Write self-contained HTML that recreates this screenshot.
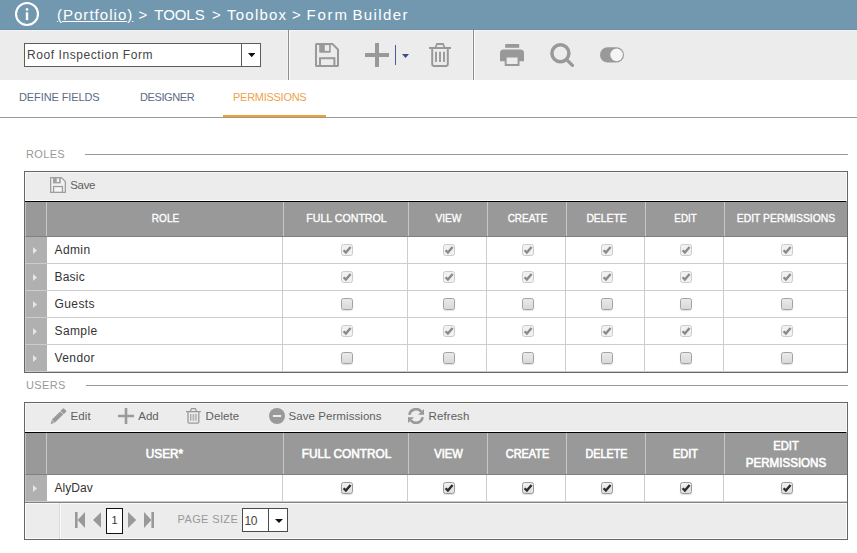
<!DOCTYPE html><html><head><meta charset="utf-8"><title>Form Builder</title><style>
html,body{margin:0;padding:0}
body{width:857px;height:553px;position:relative;overflow:hidden;background:#fff;font-family:"Liberation Sans",sans-serif;color:#333}
div,span,svg{position:absolute;box-sizing:border-box}
span.t{white-space:nowrap;line-height:1}
.hdr{left:0;top:0;width:857px;height:30px;background:#7298af;border-bottom:1px solid #6b91a9}
.cr{font-size:15px;color:#fff;top:7px;white-space:nowrap;line-height:1}
.bar{left:0;top:30px;width:857px;height:50px;background:#ececec;border-top:1px solid #f6f3f3}
.vsep{width:3px;background:#8c8c8c;top:30px;height:50px;border-left:1px solid #f3f3f3;border-right:1px solid #fcfcfc}
.tab{font-size:11px;top:92px;color:#5b6b86;letter-spacing:-0.1px}
.sec{font-size:11px;color:#999;letter-spacing:.35px}
.grid{left:24px;width:824px;border:1px solid #666;background:#fff}
.gtb{left:0;top:0;width:822px;height:28px;background:#ececec;border-left:1px solid #f7f7f7;border-top:1px solid #f5f5f5;border-right:1px solid #f7f7f7}
.gwl{left:0;width:822px;height:1px;background:#fff}
.gbl{left:0;width:822px;height:1px;background:#000;border-right:1px solid #8a8a8a}
.gh{left:0;width:822px;background:#999;border-bottom:1px solid #808080;border-left:1px solid #c2c2c2}
.ghs{width:1px;background:#c8c8c8}
.ght{color:#fff;white-space:nowrap;text-align:center;line-height:1}
.ght.n{-webkit-text-stroke:.35px #fff}
.ght.b{-webkit-text-stroke:.6px #fff}
.exp{left:0;width:21.5px;background:#b0b0b0;border-left:1px solid #c4c4c4}
.rs{height:1px;background:#cdcdcd}
.cs{width:1px;background:#cdcdcd}
.cell{font-size:12px;color:#333;letter-spacing:.4px;white-space:nowrap;line-height:1}
.tbt{font-size:11.5px;color:#606060;white-space:nowrap;line-height:1}
.cb{width:12px;height:12px;border-radius:2.5px}
.cb svg{left:-1px;top:-1px}
.cb.dc{background:#f1f1f1;border:1px solid #cccccc}
.cb.u{background:linear-gradient(#e9e9e9,#d9d9d9);border:1px solid #a2a2a2;box-shadow:0 1px 1px rgba(0,0,0,.12)}
.cb.c{background:linear-gradient(#f2f2f2,#dedede);border:1px solid #999;box-shadow:0 1px 1px rgba(0,0,0,.12)}
</style></head><body>
<div class="hdr">
<svg style="left:14px;top:1px" width="26" height="26" viewBox="0 0 26 26"><circle cx="13" cy="13" r="11" fill="none" stroke="#fff" stroke-width="2.1"/><rect x="11.8" y="7.3" width="2.4" height="2.3" fill="#fff"/><rect x="11.8" y="11.3" width="2.4" height="7.8" fill="#fff"/></svg>
<span class="cr" id="c1" style="left:56.90px;letter-spacing:1.040px;text-decoration:underline">(Portfolio)</span>
<span class="cr" id="c2" style="left:138.50px;letter-spacing:1.000px">&gt;</span>
<span class="cr" id="c3" style="left:154.30px;letter-spacing:-0.050px">TOOLS</span>
<span class="cr" id="c4" style="left:212.00px;letter-spacing:1.000px">&gt;</span>
<span class="cr" id="c5" style="left:227.00px;letter-spacing:1.233px">Toolbox</span>
<span class="cr" id="c6" style="left:292.10px;letter-spacing:1.000px">&gt;</span>
<span class="cr" id="c7" style="left:306.50px;letter-spacing:1.800px">Form</span>
<span class="cr" id="c8" style="left:352.50px;letter-spacing:1.367px">Builder</span>
</div>
<div class="bar"></div>
<div id="sel" style="left:24px;top:43px;width:237px;height:24px;border:1px solid #5c5c5c;background:#fff"><span class="t" id="seltxt" style="left:2px;top:5px;font-size:12px;color:#444;letter-spacing:.57px">Roof Inspection Form</span><div style="left:216px;top:0;width:1px;height:22px;background:#5c5c5c"></div><svg style="left:222.8px;top:9px" width="7.4" height="4.2" viewBox="0 0 7.4 4.2"><path d="M0 0H7.4L3.7 4.2Z" fill="#111"/></svg></div>
<div class="vsep" style="left:287px"></div><div class="vsep" style="left:472px"></div>
<svg style="left:315px;top:43px" width="24" height="24" viewBox="0 0 24 24"><path d="M1.6 1H17.5L23 6.5V22.4Q23 23 22.4 23H1.6Q1 23 1 22.4V1.6Q1 1 1.6 1Z" fill="none" stroke="#999" stroke-width="2"/><path d="M4.2 1.5H15.7V8.8Q15.7 9.8 14.7 9.8H5.2Q4.2 9.8 4.2 8.8Z" fill="#999"/><rect x="9.8" y="2.1" width="4.3" height="5.8" fill="#ececec"/><rect x="5" y="15.2" width="14.4" height="7.8" fill="none" stroke="#999" stroke-width="2"/></svg>
<svg style="left:365px;top:43px" width="24" height="24" viewBox="0 0 24 24"><path d="M10 0H14V10H24V14H14V24H10V14H0V10H10Z" fill="#999"/></svg>
<div style="left:395px;top:45px;width:1px;height:20px;background:#4a59a0"></div>
<svg style="left:402px;top:54px" width="7" height="4" viewBox="0 0 7 4"><path d="M0 0H7L3.5 4Z" fill="#3c4b90"/></svg>
<svg style="left:429px;top:43px" width="22" height="24" viewBox="0 0 22 24"><path d="M0 4H22V6H0Z" fill="#999"/><path d="M6.5 4.5L8 1H14L15.5 4.5" fill="none" stroke="#999" stroke-width="1.8"/><path d="M3.2 6V21Q3.2 23 5.2 23H16.8Q18.8 23 18.8 21V6" fill="none" stroke="#999" stroke-width="2"/><path d="M7 8.7V19M11 8.7V19M15 8.7V19" stroke="#999" stroke-width="1.9"/></svg>
<svg style="left:500px;top:44px" width="24" height="22" viewBox="0 0 24 22"><rect x="5.2" y="0" width="14" height="3.8" fill="#999"/><path d="M0 9Q0 5.4 3.6 5.4H20.4Q24 5.4 24 9V17.3H0Z" fill="#999"/><rect x="4.7" y="12.2" width="14.8" height="9.8" fill="#999"/><rect x="6.6" y="13.5" width="11" height="6.5" fill="#ececec"/></svg>
<svg style="left:550px;top:43px" width="24" height="24" viewBox="0 0 24 24"><circle cx="10.4" cy="10.3" r="8.5" fill="none" stroke="#999" stroke-width="3.5"/><path d="M16.6 16.6L22.4 22.4" stroke="#999" stroke-width="3.4" stroke-linecap="round"/></svg>
<svg style="left:600px;top:47px" width="24" height="16" viewBox="0 0 24 16"><rect x="0" y="0.3" width="24" height="15.2" rx="7.6" fill="#999"/><circle cx="16.6" cy="7.9" r="6.3" fill="#f4f4f4"/></svg>
<span class="t tab" id="tab1" style="left:19px">DEFINE FIELDS</span>
<span class="t tab" id="tab2" style="left:140px;letter-spacing:-.4px">DESIGNER</span>
<span class="t tab" id="tab3" style="left:233px;color:#f0a24a;letter-spacing:-.27px">PERMISSIONS</span>
<div style="left:0;top:117px;width:857px;height:1px;background:#9a9a9a"></div>
<div style="left:223px;top:115px;width:103px;height:2px;background:#f0a030"></div>
<span class="t sec" id="roles" style="left:26px;top:149px">ROLES</span><div style="left:85px;top:154px;width:763px;height:1px;background:#999"></div>
<span class="t sec" id="users" style="left:26px;top:380px">USERS</span><div style="left:86px;top:385px;width:762px;height:1px;background:#999"></div>
<div class="grid" style="top:171px;height:202px">
<div class="gtb"><svg style="left:24px;top:4px" width="16" height="16" viewBox="0 0 16 16"><path d="M.65 .65H11.4L15.35 4.6V15.35H.65Z" fill="#f1f1f1" stroke="#9e9e9e" stroke-width="1.3"/><path d="M3 .8H10.8V6.4H3Z" fill="#a2a2a2"/><rect x="6.7" y="1.4" width="2.4" height="3.6" fill="#f1f1f1"/><rect x="3.55" y="9.55" width="8.9" height="5.8" fill="#f6f6f6" stroke="#9e9e9e" stroke-width="1.3"/></svg><span class="tbt" id="tsave" style="left:44.20px;top:6.5px;letter-spacing:-0.300px">Save</span></div>
<div class="gwl" style="top:28px"></div><div class="gbl" style="top:29px"></div>
<div class="gh" style="top:30px;height:35px">
<div class="ghs" style="left:20px;top:0;height:34px"></div>
<div class="ghs" style="left:257px;top:0;height:34px"></div>
<div class="ghs" style="left:382px;top:0;height:34px"></div>
<div class="ghs" style="left:461px;top:0;height:34px"></div>
<div class="ghs" style="left:540px;top:0;height:34px"></div>
<div class="ghs" style="left:619px;top:0;height:34px"></div>
<div class="ghs" style="left:698px;top:0;height:34px"></div>
<span class="ght n" id="ah0_0" style="left:20.6px;width:237px;top:10.5px;font-size:11px;font-weight:normal;transform:scaleX(0.9100)">ROLE</span>
<span class="ght n" id="ah1_0" style="left:257.6px;width:125px;top:10.5px;font-size:11px;font-weight:normal;transform:scaleX(0.9650)">FULL CONTROL</span>
<span class="ght n" id="ah2_0" style="left:382.6px;width:79px;top:10.5px;font-size:11px;font-weight:normal;transform:scaleX(0.9200)">VIEW</span>
<span class="ght n" id="ah3_0" style="left:461.6px;width:79px;top:10.5px;font-size:11px;font-weight:normal;transform:scaleX(0.9050)">CREATE</span>
<span class="ght n" id="ah4_0" style="left:540.6px;width:79px;top:10.5px;font-size:11px;font-weight:normal;transform:scaleX(0.9400)">DELETE</span>
<span class="ght n" id="ah5_0" style="left:619.6px;width:79px;top:10.5px;font-size:11px;font-weight:normal;transform:scaleX(0.8900)">EDIT</span>
<span class="ght n" id="ah6_0" style="left:698.6px;width:122px;top:10.5px;font-size:11px;font-weight:normal;transform:scaleX(0.9450)">EDIT PERMISSIONS</span>
</div>
<div class="exp" style="top:65px;height:26px"></div>
<svg style="left:8px;top:75px" width="4" height="7" viewBox="0 0 4 7"><path d="M0 0L4 3.5L0 7Z" fill="#e6e6e6"/></svg>
<span class="cell" id="ar0" style="left:29.5px;top:72px">Admin</span>
<span class="cb dc" style="left:316px;top:72px"><svg width="12" height="12" viewBox="0 0 12 12"><path d="M2.6 6.2 L4.9 8.6 L9.6 2.9" fill="none" stroke="#8a8a8a" stroke-width="2.35"/></svg></span>
<span class="cb dc" style="left:418px;top:72px"><svg width="12" height="12" viewBox="0 0 12 12"><path d="M2.6 6.2 L4.9 8.6 L9.6 2.9" fill="none" stroke="#8a8a8a" stroke-width="2.35"/></svg></span>
<span class="cb dc" style="left:497px;top:72px"><svg width="12" height="12" viewBox="0 0 12 12"><path d="M2.6 6.2 L4.9 8.6 L9.6 2.9" fill="none" stroke="#8a8a8a" stroke-width="2.35"/></svg></span>
<span class="cb dc" style="left:576px;top:72px"><svg width="12" height="12" viewBox="0 0 12 12"><path d="M2.6 6.2 L4.9 8.6 L9.6 2.9" fill="none" stroke="#8a8a8a" stroke-width="2.35"/></svg></span>
<span class="cb dc" style="left:655px;top:72px"><svg width="12" height="12" viewBox="0 0 12 12"><path d="M2.6 6.2 L4.9 8.6 L9.6 2.9" fill="none" stroke="#8a8a8a" stroke-width="2.35"/></svg></span>
<span class="cb dc" style="left:756px;top:72px"><svg width="12" height="12" viewBox="0 0 12 12"><path d="M2.6 6.2 L4.9 8.6 L9.6 2.9" fill="none" stroke="#8a8a8a" stroke-width="2.35"/></svg></span>
<div class="rs" style="left:0;top:91px;width:822px"></div>
<div class="cs" style="left:257px;top:65px;height:26px"></div>
<div class="cs" style="left:382px;top:65px;height:26px"></div>
<div class="cs" style="left:461px;top:65px;height:26px"></div>
<div class="cs" style="left:540px;top:65px;height:26px"></div>
<div class="cs" style="left:619px;top:65px;height:26px"></div>
<div class="cs" style="left:698px;top:65px;height:26px"></div>
<div class="exp" style="top:92px;height:26px"></div>
<svg style="left:8px;top:102px" width="4" height="7" viewBox="0 0 4 7"><path d="M0 0L4 3.5L0 7Z" fill="#e6e6e6"/></svg>
<span class="cell" id="ar1" style="left:29.5px;top:99px;letter-spacing:.2px">Basic</span>
<span class="cb dc" style="left:316px;top:99px"><svg width="12" height="12" viewBox="0 0 12 12"><path d="M2.6 6.2 L4.9 8.6 L9.6 2.9" fill="none" stroke="#8a8a8a" stroke-width="2.35"/></svg></span>
<span class="cb dc" style="left:418px;top:99px"><svg width="12" height="12" viewBox="0 0 12 12"><path d="M2.6 6.2 L4.9 8.6 L9.6 2.9" fill="none" stroke="#8a8a8a" stroke-width="2.35"/></svg></span>
<span class="cb dc" style="left:497px;top:99px"><svg width="12" height="12" viewBox="0 0 12 12"><path d="M2.6 6.2 L4.9 8.6 L9.6 2.9" fill="none" stroke="#8a8a8a" stroke-width="2.35"/></svg></span>
<span class="cb dc" style="left:576px;top:99px"><svg width="12" height="12" viewBox="0 0 12 12"><path d="M2.6 6.2 L4.9 8.6 L9.6 2.9" fill="none" stroke="#8a8a8a" stroke-width="2.35"/></svg></span>
<span class="cb dc" style="left:655px;top:99px"><svg width="12" height="12" viewBox="0 0 12 12"><path d="M2.6 6.2 L4.9 8.6 L9.6 2.9" fill="none" stroke="#8a8a8a" stroke-width="2.35"/></svg></span>
<span class="cb dc" style="left:756px;top:99px"><svg width="12" height="12" viewBox="0 0 12 12"><path d="M2.6 6.2 L4.9 8.6 L9.6 2.9" fill="none" stroke="#8a8a8a" stroke-width="2.35"/></svg></span>
<div class="rs" style="left:0;top:118px;width:822px"></div>
<div class="cs" style="left:257px;top:92px;height:26px"></div>
<div class="cs" style="left:382px;top:92px;height:26px"></div>
<div class="cs" style="left:461px;top:92px;height:26px"></div>
<div class="cs" style="left:540px;top:92px;height:26px"></div>
<div class="cs" style="left:619px;top:92px;height:26px"></div>
<div class="cs" style="left:698px;top:92px;height:26px"></div>
<div class="exp" style="top:119px;height:26px"></div>
<svg style="left:8px;top:129px" width="4" height="7" viewBox="0 0 4 7"><path d="M0 0L4 3.5L0 7Z" fill="#e6e6e6"/></svg>
<span class="cell" id="ar2" style="left:29.5px;top:126px">Guests</span>
<span class="cb u" style="left:316px;top:126px"></span>
<span class="cb u" style="left:418px;top:126px"></span>
<span class="cb u" style="left:497px;top:126px"></span>
<span class="cb u" style="left:576px;top:126px"></span>
<span class="cb u" style="left:655px;top:126px"></span>
<span class="cb u" style="left:756px;top:126px"></span>
<div class="rs" style="left:0;top:145px;width:822px"></div>
<div class="cs" style="left:257px;top:119px;height:26px"></div>
<div class="cs" style="left:382px;top:119px;height:26px"></div>
<div class="cs" style="left:461px;top:119px;height:26px"></div>
<div class="cs" style="left:540px;top:119px;height:26px"></div>
<div class="cs" style="left:619px;top:119px;height:26px"></div>
<div class="cs" style="left:698px;top:119px;height:26px"></div>
<div class="exp" style="top:146px;height:26px"></div>
<svg style="left:8px;top:156px" width="4" height="7" viewBox="0 0 4 7"><path d="M0 0L4 3.5L0 7Z" fill="#e6e6e6"/></svg>
<span class="cell" id="ar3" style="left:29.5px;top:153px">Sample</span>
<span class="cb dc" style="left:316px;top:153px"><svg width="12" height="12" viewBox="0 0 12 12"><path d="M2.6 6.2 L4.9 8.6 L9.6 2.9" fill="none" stroke="#8a8a8a" stroke-width="2.35"/></svg></span>
<span class="cb dc" style="left:418px;top:153px"><svg width="12" height="12" viewBox="0 0 12 12"><path d="M2.6 6.2 L4.9 8.6 L9.6 2.9" fill="none" stroke="#8a8a8a" stroke-width="2.35"/></svg></span>
<span class="cb dc" style="left:497px;top:153px"><svg width="12" height="12" viewBox="0 0 12 12"><path d="M2.6 6.2 L4.9 8.6 L9.6 2.9" fill="none" stroke="#8a8a8a" stroke-width="2.35"/></svg></span>
<span class="cb dc" style="left:576px;top:153px"><svg width="12" height="12" viewBox="0 0 12 12"><path d="M2.6 6.2 L4.9 8.6 L9.6 2.9" fill="none" stroke="#8a8a8a" stroke-width="2.35"/></svg></span>
<span class="cb dc" style="left:655px;top:153px"><svg width="12" height="12" viewBox="0 0 12 12"><path d="M2.6 6.2 L4.9 8.6 L9.6 2.9" fill="none" stroke="#8a8a8a" stroke-width="2.35"/></svg></span>
<span class="cb dc" style="left:756px;top:153px"><svg width="12" height="12" viewBox="0 0 12 12"><path d="M2.6 6.2 L4.9 8.6 L9.6 2.9" fill="none" stroke="#8a8a8a" stroke-width="2.35"/></svg></span>
<div class="rs" style="left:0;top:172px;width:822px"></div>
<div class="cs" style="left:257px;top:146px;height:26px"></div>
<div class="cs" style="left:382px;top:146px;height:26px"></div>
<div class="cs" style="left:461px;top:146px;height:26px"></div>
<div class="cs" style="left:540px;top:146px;height:26px"></div>
<div class="cs" style="left:619px;top:146px;height:26px"></div>
<div class="cs" style="left:698px;top:146px;height:26px"></div>
<div class="exp" style="top:173px;height:26px"></div>
<svg style="left:8px;top:183px" width="4" height="7" viewBox="0 0 4 7"><path d="M0 0L4 3.5L0 7Z" fill="#e6e6e6"/></svg>
<span class="cell" id="ar4" style="left:29.5px;top:180px">Vendor</span>
<span class="cb u" style="left:316px;top:180px"></span>
<span class="cb u" style="left:418px;top:180px"></span>
<span class="cb u" style="left:497px;top:180px"></span>
<span class="cb u" style="left:576px;top:180px"></span>
<span class="cb u" style="left:655px;top:180px"></span>
<span class="cb u" style="left:756px;top:180px"></span>
<div class="rs" style="left:0;top:199px;width:822px"></div>
<div class="cs" style="left:257px;top:173px;height:26px"></div>
<div class="cs" style="left:382px;top:173px;height:26px"></div>
<div class="cs" style="left:461px;top:173px;height:26px"></div>
<div class="cs" style="left:540px;top:173px;height:26px"></div>
<div class="cs" style="left:619px;top:173px;height:26px"></div>
<div class="cs" style="left:698px;top:173px;height:26px"></div>
</div>
<div class="grid" style="top:402px;height:138px">
<div class="gtb"><svg style="left:23.5px;top:3.5px" width="17" height="17" viewBox="0 0 17 17"><g transform="translate(0.7,15.9) rotate(-45)" fill="#999"><path d="M0 0L3.1 -1.9V1.9Z"/><rect x="3.6" y="-2.15" width="11.9" height="4.3"/><path d="M16.1 -2.3H19.3Q20.3 -2.3 20.3 -1.3V1.3Q20.3 2.3 19.3 2.3H16.1Z"/></g></svg><span class="tbt" id="tedit" style="left:44.60px;top:6.5px;letter-spacing:0.100px">Edit</span><svg style="left:92px;top:4px" width="16" height="16" viewBox="0 0 16 16"><path d="M6.7 0H9.3V6.7H16V9.3H9.3V16H6.7V9.3H0V6.7H6.7Z" fill="#999"/></svg><span class="tbt" id="tadd" style="left:112.30px;top:6.5px;letter-spacing:0.000px">Add</span><svg style="left:159.6px;top:3.9px" width="15" height="16" viewBox="0 0 15 16"><path d="M0 3H14.8V4.3H0Z" fill="#999"/><path d="M4.3 3.3L5.5 .7H9.4L10.6 3.3" fill="none" stroke="#999" stroke-width="1.2"/><path d="M2 4.3V13.8Q2 15.2 3.4 15.2H11.4Q12.8 15.2 12.8 13.8V4.3" fill="none" stroke="#999" stroke-width="1.3"/><path d="M4.8 6.1V12.8M10 6.1V12.8" stroke="#999" stroke-width="1.1"/><path d="M7.4 6.1V12.8" stroke="#b4b4b4" stroke-width="1.8"/></svg><span class="tbt" id="tdel" style="left:179.50px;top:6.5px;letter-spacing:0.100px">Delete</span><svg style="left:242.6px;top:4.2px" width="16" height="16" viewBox="0 0 16 16"><circle cx="8" cy="8" r="8" fill="#999"/><rect x="3.9" y="7" width="8.3" height="2" fill="#ececec"/></svg><span class="tbt" id="tsp" style="left:262.50px;top:6.5px;letter-spacing:0.070px">Save Permissions</span><svg style="left:382px;top:4px" width="16" height="16" viewBox="0 0 16 16"><path d="M1.4 6.9A6.7 6.7 0 0 1 13.3 3.7" fill="none" stroke="#999" stroke-width="2.6"/><path d="M16 .9V6.8H10Z" fill="#999"/><path d="M14.6 9.1A6.7 6.7 0 0 1 2.7 12.3" fill="none" stroke="#999" stroke-width="2.6"/><path d="M0 15.1V9.2H6Z" fill="#999"/></svg><span class="tbt" id="tref" style="left:402.50px;top:6.5px;letter-spacing:0.100px">Refresh</span></div>
<div class="gwl" style="top:28px"></div><div class="gbl" style="top:29px"></div>
<div class="gh" style="top:30px;height:42px">
<div class="ghs" style="left:20px;top:0;height:41px"></div>
<div class="ghs" style="left:257px;top:0;height:41px"></div>
<div class="ghs" style="left:382px;top:0;height:41px"></div>
<div class="ghs" style="left:461px;top:0;height:41px"></div>
<div class="ghs" style="left:540px;top:0;height:41px"></div>
<div class="ghs" style="left:619px;top:0;height:41px"></div>
<div class="ghs" style="left:698px;top:0;height:41px"></div>
<span class="ght b" id="bh0_0" style="left:19.8px;width:237px;top:15.3px;font-size:12px;font-weight:normal;transform:scaleX(0.9850)">USER*</span>
<span class="ght b" id="bh1_0" style="left:257.6px;width:125px;top:15.3px;font-size:12px;font-weight:normal;transform:scaleX(0.9850)">FULL CONTROL</span>
<span class="ght b" id="bh2_0" style="left:382.6px;width:79px;top:15.3px;font-size:12px;font-weight:normal;transform:scaleX(0.9300)">VIEW</span>
<span class="ght b" id="bh3_0" style="left:461.6px;width:79px;top:15.3px;font-size:12px;font-weight:normal;transform:scaleX(0.9100)">CREATE</span>
<span class="ght b" id="bh4_0" style="left:540.6px;width:79px;top:15.3px;font-size:12px;font-weight:normal;transform:scaleX(0.8950)">DELETE</span>
<span class="ght b" id="bh5_0" style="left:619.6px;width:79px;top:15.3px;font-size:12px;font-weight:normal;transform:scaleX(0.9200)">EDIT</span>
<span class="ght b" id="bh6_0" style="left:698.6px;width:122px;top:7.3px;font-size:12px;font-weight:normal;transform:scaleX(0.9300)">EDIT</span>
<span class="ght b" id="bh6_1" style="left:698.6px;width:122px;top:23.7px;font-size:12px;font-weight:normal;transform:scaleX(0.9650)">PERMISSIONS</span>
</div>
<div class="exp" style="top:72px;height:26px"></div>
<svg style="left:8px;top:82px" width="4" height="7" viewBox="0 0 4 7"><path d="M0 0L4 3.5L0 7Z" fill="#e6e6e6"/></svg>
<span class="cell" id="br0" style="left:29.5px;top:79px;letter-spacing:.05px">AlyDav</span>
<span class="cb c" style="left:316px;top:79px"><svg width="12" height="12" viewBox="0 0 12 12"><path d="M2.6 6.2 L4.9 8.6 L9.6 2.9" fill="none" stroke="#2c2c2c" stroke-width="2.35"/></svg></span>
<span class="cb c" style="left:418px;top:79px"><svg width="12" height="12" viewBox="0 0 12 12"><path d="M2.6 6.2 L4.9 8.6 L9.6 2.9" fill="none" stroke="#2c2c2c" stroke-width="2.35"/></svg></span>
<span class="cb c" style="left:497px;top:79px"><svg width="12" height="12" viewBox="0 0 12 12"><path d="M2.6 6.2 L4.9 8.6 L9.6 2.9" fill="none" stroke="#2c2c2c" stroke-width="2.35"/></svg></span>
<span class="cb c" style="left:576px;top:79px"><svg width="12" height="12" viewBox="0 0 12 12"><path d="M2.6 6.2 L4.9 8.6 L9.6 2.9" fill="none" stroke="#2c2c2c" stroke-width="2.35"/></svg></span>
<span class="cb c" style="left:655px;top:79px"><svg width="12" height="12" viewBox="0 0 12 12"><path d="M2.6 6.2 L4.9 8.6 L9.6 2.9" fill="none" stroke="#2c2c2c" stroke-width="2.35"/></svg></span>
<span class="cb c" style="left:756px;top:79px"><svg width="12" height="12" viewBox="0 0 12 12"><path d="M2.6 6.2 L4.9 8.6 L9.6 2.9" fill="none" stroke="#2c2c2c" stroke-width="2.35"/></svg></span>
<div class="rs" style="left:0;top:98px;width:822px"></div>
<div class="cs" style="left:257px;top:72px;height:26px"></div>
<div class="cs" style="left:382px;top:72px;height:26px"></div>
<div class="cs" style="left:461px;top:72px;height:26px"></div>
<div class="cs" style="left:540px;top:72px;height:26px"></div>
<div class="cs" style="left:619px;top:72px;height:26px"></div>
<div class="cs" style="left:698px;top:72px;height:26px"></div>
<div style="left:0;top:99px;width:822px;height:1px;background:#808080"></div><div style="left:0;top:100px;width:822px;height:36px;background:#ececec;border:1px solid #fbfbfb"></div><div style="left:35px;top:100px;width:1px;height:36px;background:#fafafa"></div><div style="left:34px;top:100px;width:1px;height:36px;background:#dcdcdc"></div><svg style="left:50px;top:109px" width="10" height="16" viewBox="0 0 10 16"><rect x="0" y="0" width="2.6" height="16" fill="#999"/><path d="M10 0V16L2.6 8Z" fill="#999"/></svg><svg style="left:68px;top:109px" width="8.2" height="16" viewBox="0 0 8.2 16"><path d="M8.2 0V16L0 8Z" fill="#999"/></svg><div style="left:81px;top:105px;width:17px;height:26px;border:1.3px solid #111;background:#fff"></div><span class="t" id="pg1" style="left:86.6px;top:112px;font-size:11px;color:#333">1</span><svg style="left:103px;top:109px" width="10" height="16" viewBox="0 0 10 16"><path d="M0 0V16L8.2 8Z" fill="#999"/></svg><svg style="left:119px;top:109px" width="10" height="16" viewBox="0 0 10 16"><rect x="7.4" y="0" width="2.6" height="16" fill="#999"/><path d="M0 0V16L7.4 8Z" fill="#999"/></svg><span class="t" id="psz" style="left:152.6px;top:110.8px;font-size:11px;color:#999;letter-spacing:.36px">PAGE SIZE</span><div style="left:217px;top:105px;width:46px;height:24px;border:1px solid #4a4a4a;background:#fff"><span class="t" style="left:1.5px;top:5.5px;font-size:12px;color:#444;letter-spacing:-.4px">10</span><div style="left:25px;top:0;width:1px;height:22px;background:#4a4a4a"></div><svg style="left:31.5px;top:9.5px" width="8" height="4" viewBox="0 0 8 4"><path d="M0 0H8L4 4Z" fill="#111"/></svg></div>
</div>
</body></html>
